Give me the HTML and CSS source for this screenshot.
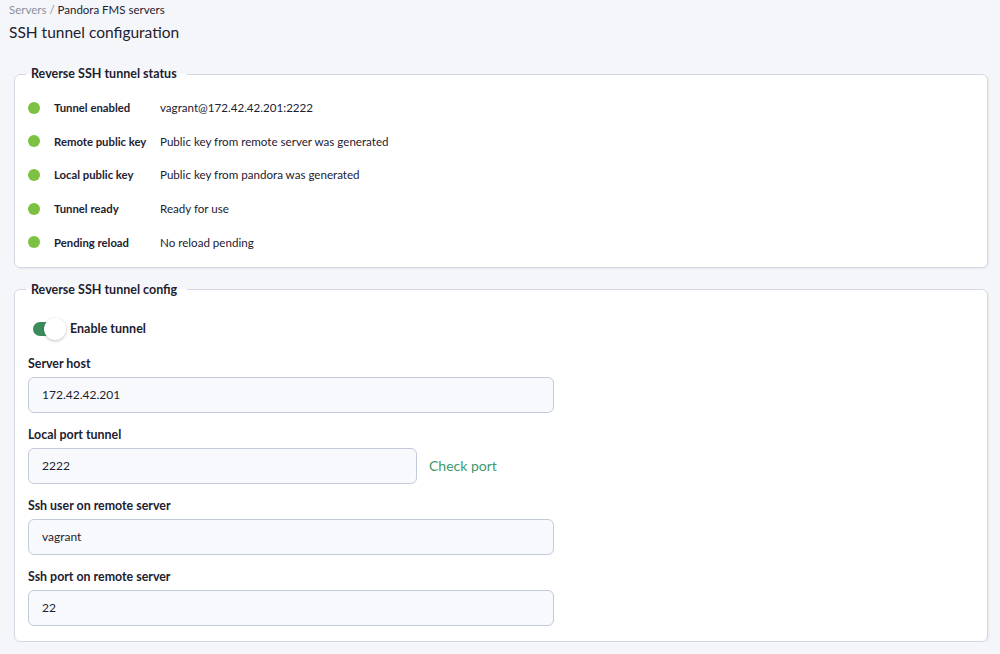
FILE: index.html
```html
<!DOCTYPE html>
<html lang="en">
<head>
    <meta charset="UTF-8">
    <meta name="viewport" content="width=device-width, initial-scale=1.0">
    <title>SSH tunnel configuration</title>
    <link rel="stylesheet" href="styles.css">
</head>
<body>
    <div class="page">
        <div class="breadcrumb"><span class="crumb-muted">Servers /</span> Pandora FMS servers</div>
        <h1>SSH tunnel configuration</h1>

        <fieldset class="box status-box">
            <legend>Reverse SSH tunnel status</legend>
            <div class="status-row">
                <span class="dot"></span>
                <span class="status-label">Tunnel enabled</span>
                <span class="status-value">vagrant@172.42.42.201:2222</span>
            </div>
            <div class="status-row">
                <span class="dot"></span>
                <span class="status-label">Remote public key</span>
                <span class="status-value">Public key from remote server was generated</span>
            </div>
            <div class="status-row">
                <span class="dot"></span>
                <span class="status-label">Local public key</span>
                <span class="status-value">Public key from pandora was generated</span>
            </div>
            <div class="status-row">
                <span class="dot"></span>
                <span class="status-label">Tunnel ready</span>
                <span class="status-value">Ready for use</span>
            </div>
            <div class="status-row">
                <span class="dot"></span>
                <span class="status-label">Pending reload</span>
                <span class="status-value">No reload pending</span>
            </div>
        </fieldset>

        <fieldset class="box config-box">
            <legend>Reverse SSH tunnel config</legend>
            <label class="switch-row">
                <span class="switch">
                    <span class="switch-track"></span>
                    <span class="switch-knob"></span>
                </span>
                <span>Enable tunnel</span>
            </label>

            <div class="field">
                <label for="server-host">Server host</label>
                <input id="server-host" class="text-input" type="text" value="172.42.42.201">
            </div>
            <div class="field">
                <label for="local-port">Local port tunnel</label>
                <div class="inline">
                    <input id="local-port" class="text-input short" type="text" value="2222">
                    <a href="#" class="check-link">Check port</a>
                </div>
            </div>
            <div class="field">
                <label for="ssh-user">Ssh user on remote server</label>
                <input id="ssh-user" class="text-input" type="text" value="vagrant">
            </div>
            <div class="field">
                <label for="ssh-port">Ssh port on remote server</label>
                <input id="ssh-port" class="text-input" type="text" value="22">
            </div>
        </fieldset>
    </div>
</body>
</html>
```

FILE: styles.css
```css
body {
    font-family: Lato, 'Noto Sans', sans-serif;
    margin: 0;
    color: #1d2130;
    background-color: #f5f6fa;
}
.page {
    padding: 2px 12px 0 9px;
}
.breadcrumb {
    font-size: 11.5px;
    line-height: 16px;
    color: #1d2130;
}
.crumb-muted {
    color: #8c909c;
}
h1 {
    font-size: 15.5px;
    font-weight: 400;
    line-height: 20px;
    margin: 4px 0 0 0;
}
.box {
    margin: 24px 0 0 5px;
    padding: 0 13px;
    background: #fff;
    border: 1px solid #d3d7e1;
    border-radius: 6px;
    box-shadow: 1px 1px 2px rgba(0, 0, 0, 0.06);
}
.box legend {
    font-size: 12.5px;
    font-weight: 700;
    line-height: 16px;
    padding: 0 10px 0 5px;
    margin-left: -2px;
}
.status-box {
    padding-top: 9px;
    padding-bottom: 8px;
}
.status-row {
    display: flex;
    align-items: center;
    height: 33.6px;
    font-size: 11.6px;
}
.dot {
    width: 12px;
    height: 12px;
    border-radius: 50%;
    background: #7cc142;
    margin-right: 14px;
}
.status-label {
    width: 106px;
    font-size: 11.3px;
    font-weight: 700;
}
.config-box {
    margin-top: 14px;
    padding-top: 20px;
    padding-bottom: 15px;
}
.switch-row {
    display: flex;
    align-items: center;
    font-size: 12.5px;
    font-weight: 700;
    height: 22px;
    margin-left: 5px;
}
.switch {
    position: relative;
    width: 33px;
    height: 22px;
    margin-right: 4px;
}
.switch-track {
    position: absolute;
    left: 0;
    top: 4px;
    width: 28px;
    height: 14px;
    border-radius: 7px;
    background: #3c8b5b;
}
.switch-knob {
    position: absolute;
    right: 0;
    top: 0;
    width: 22px;
    height: 22px;
    border-radius: 50%;
    background: #fff;
    box-shadow: 0 1px 3px rgba(0, 0, 0, 0.25);
}
.field {
    margin-top: 14px;
}
.switch-row + .field {
    margin-top: 16px;
}
.field label {
    display: block;
    font-size: 12.4px;
    font-weight: 700;
    line-height: 16px;
    margin-bottom: 5px;
}
.text-input {
    box-sizing: border-box;
    width: 526px;
    height: 36px;
    padding: 0 13px;
    font-family: Lato, 'Noto Sans', sans-serif;
    font-size: 12px;
    color: #1d2130;
    background: #f8f9fc;
    border: 1.5px solid #c3cad9;
    border-radius: 6px;
}
.text-input.short {
    width: 389px;
}
.inline {
    display: flex;
    align-items: center;
}
.check-link {
    margin-left: 12px;
    font-size: 14px;
    color: #3c9a6a;
    text-decoration: none;
}
```
